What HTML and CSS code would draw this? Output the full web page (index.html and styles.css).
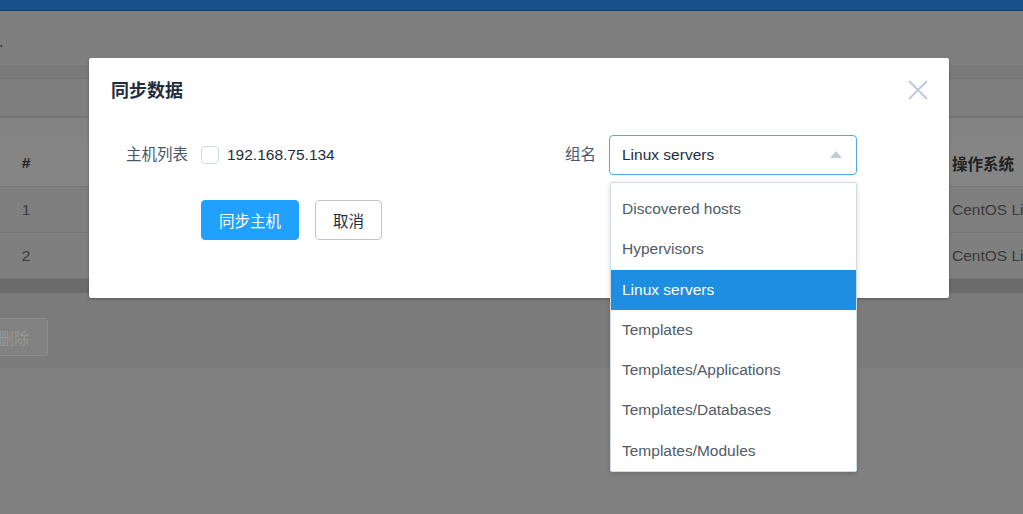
FILE: index.html
```html
<!DOCTYPE html>
<html lang="zh-CN">
<head>
<meta charset="utf-8">
<title>同步数据</title>
<link rel="stylesheet" href="styles.css">
</head>
<body>
<div class="page">
  <div class="topbar"></div>
  <div class="crumb"><span class="crumb-text">.</span></div>
  <div class="crumb-line"></div>
  <div class="searchbox"></div>
  <div class="gap-band"></div>
  <div class="grid">
    <div class="grid-row grid-head">
      <div class="cell cell-no">#</div>
      <div class="cell cell-fill"></div>
      <div class="cell cell-os">操作系统</div>
    </div>
    <div class="grid-row">
      <div class="cell cell-no">1</div>
      <div class="cell cell-fill"></div>
      <div class="cell cell-os">CentOS Li</div>
    </div>
    <div class="grid-row">
      <div class="cell cell-no">2</div>
      <div class="cell cell-fill"></div>
      <div class="cell cell-os">CentOS Li</div>
    </div>
  </div>
  <div class="scrollbar"></div>
  <div class="actions">
    <button class="btn-del" disabled>删除</button>
  </div>
  <div class="rest"></div>
</div>

<div class="dialog">
  <div class="dialog-header">
    <span class="dialog-title">同步数据</span>
    <button class="dialog-close" aria-label="close">
      <svg width="20" height="20" viewBox="0 0 20 20"><path d="M1 1 L19 19 M19 1 L1 19" stroke="#bfcbd9" stroke-width="2" fill="none"/></svg>
    </button>
  </div>
  <div class="dialog-body">
    <div class="form">
      <div class="form-item">
        <label class="form-label">主机列表</label>
        <div class="form-content">
          <label class="checkbox"><span class="checkbox-box"></span><span class="checkbox-text">192.168.75.134</span></label>
        </div>
      </div>
      <div class="form-item">
        <label class="form-label">组名</label>
        <div class="form-content">
          <div class="select">
            <div class="select-input">
              <span class="select-value">Linux servers</span>
              <svg class="select-caret" width="12" height="7" viewBox="0 0 12 7"><path d="M0 7 L6 0 L12 7 Z" fill="#c0ccda"/></svg>
            </div>
            <ul class="dropdown">
              <li class="option">Discovered hosts</li>
              <li class="option">Hypervisors</li>
              <li class="option selected">Linux servers</li>
              <li class="option">Templates</li>
              <li class="option">Templates/Applications</li>
              <li class="option">Templates/Databases</li>
              <li class="option">Templates/Modules</li>
            </ul>
          </div>
        </div>
      </div>
      <div class="form-item form-actions">
        <label class="form-label"></label>
        <div class="form-content buttons">
          <button class="btn btn-primary">同步主机</button>
          <button class="btn btn-default">取消</button>
        </div>
      </div>
    </div>
  </div>
</div>
</body>
</html>
```

FILE: styles.css
```css
* { box-sizing: border-box; }
html, body {
  margin: 0;
  padding: 0;
  width: 1023px;
  height: 514px;
  overflow: hidden;
}
body {
  background: #7f7f7f;
  font-family: "Liberation Sans", "Noto Sans CJK SC", sans-serif;
  font-size: 15.5px;
  position: relative;
}

/* background page (dimmed) */
.page {
  display: flex;
  flex-direction: column;
  width: 1023px;
  height: 514px;
}
.topbar { height: 11px; background: #16518a; border-bottom: 1px solid #0f3e6b; flex: none; }
.crumb { height: 54px; background: #7f7f7f; position: relative; flex: none; }
.crumb-text { position: absolute; left: -1px; top: 22px; color: #2a2a2a; font-size: 16px; }
.crumb-line { height: 13px; background: #7a7a7a; flex: none; }
.searchbox {
  height: 40px;
  flex: none;
  background: #7f7f7f;
  border-top: 1px solid #767676;
  border-bottom: 2px solid #767676;
}
.gap-band { height: 22px; background: #838383; flex: none; }
.grid { display: flex; flex-direction: column; flex: none; }
.grid-row {
  display: flex;
  height: 46px;
  align-items: center;
  border-bottom: 1px solid #777;
  background: #7f7f7f;
  color: #3a3a3a;
}
.grid-head { height: 47px; background: #858585; color: #222; font-weight: bold; }
.cell { white-space: nowrap; }
.cell-no { width: 52px; text-align: center; }
.cell-fill { flex: 1; }
.cell-os { width: 83px; padding-left: 12px; overflow: hidden; }
.scrollbar { height: 14px; background: #6b6b6b; flex: none; }
.actions {
  height: 75px;
  flex: none;
  background: #7b7b7b;
  display: flex;
  align-items: flex-start;
  padding-top: 25px;
}
.btn-del {
  margin-left: -20px;
  width: 68px;
  height: 38px;
  border: 1px solid #8b8b8b;
  background: #818181;
  color: #979797;
  font: inherit;
  border-radius: 3px;
}
.rest { flex: 1; background: #808080; }

/* dialog */
.dialog {
  position: absolute;
  left: 89px;
  top: 58px;
  width: 860px;
  height: 240px;
  background: #fff;
  border-radius: 2px;
  box-shadow: 0 1px 3px rgba(0,0,0,0.3);
  display: flex;
  flex-direction: column;
}
.dialog-header {
  position: relative;
  padding: 22px 22px 0;
}
.dialog-title {
  display: block;
  font-size: 18px;
  line-height: 22px;
  font-weight: bold;
  color: #1f2d3d;
}
.dialog-close {
  position: absolute;
  top: 22px;
  right: 21px;
  width: 20px;
  height: 20px;
  padding: 0;
  border: 0;
  background: none;
  display: flex;
}
.dialog-body { padding: 33px 22px 0; }
.form {
  display: grid;
  grid-template-columns: 408px 408px;
  row-gap: 25px;
}
.form-item { display: flex; height: 40px; }
.form-label {
  width: 90px;
  flex: none;
  padding-right: 13px;
  text-align: right;
  line-height: 40px;
  color: #48576a;
}
.form-content { flex: 1; display: flex; align-items: center; }

.checkbox { display: flex; align-items: center; gap: 8px; }
.checkbox-box {
  width: 18px;
  height: 18px;
  border: 1px solid #d1dbe5;
  border-radius: 4px;
  background: #fff;
}
.checkbox-text { color: #1f2d3d; }

.select { position: relative; width: 248px; }
.select-input {
  height: 40px;
  border: 1px solid #4fa9ee;
  border-radius: 4px;
  padding: 0 14px 0 12px;
  display: flex;
  align-items: center;
  justify-content: space-between;
}
.select-value { color: #1f2d3d; }
.select-caret { margin-top: -1px; }

.dropdown {
  position: absolute;
  top: 47px;
  left: 1px;
  width: 247px;
  margin: 0;
  padding: 6px 0 0;
  list-style: none;
  background: #fff;
  border: 1px solid #d1dbe5;
  border-radius: 2px;
  box-shadow: 0 2px 4px rgba(0,0,0,0.12), 0 0 6px rgba(0,0,0,0.04);
  z-index: 2;
}
.option {
  height: 40.3px;
  line-height: 40.3px;
  padding: 0 11px;
  color: #4f5b69;
  white-space: nowrap;
}
.option.selected { background: #1d8ee2; color: #fff; }

.buttons { gap: 16px; align-items: stretch; }
.btn {
  font: inherit;
  height: 40px;
  padding: 0 17px;
  border-radius: 4px;
  border: 1px solid #c4c4c4;
  background: #fff;
  color: #1f2d3d;
}
.btn-primary { background: #20a0ff; border-color: #20a0ff; color: #fff; }
```
